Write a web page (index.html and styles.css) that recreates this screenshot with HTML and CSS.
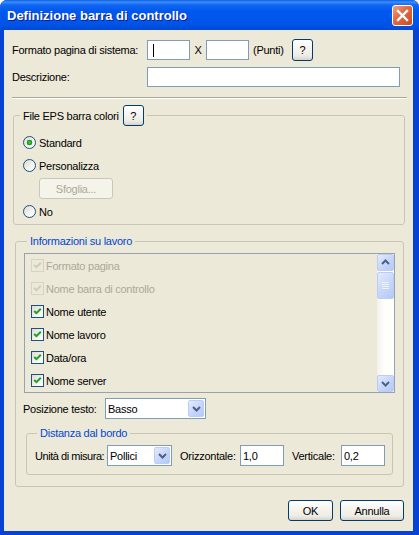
FILE: index.html
```html
<!DOCTYPE html>
<html lang="it">
<head>
<meta charset="utf-8">
<title>Definizione barra di controllo</title>
<link rel="stylesheet" href="styles.css">
</head>
<body>
<div class="window">
  <header class="titlebar">
    <span class="title">Definizione barra di controllo</span>
    <span class="close"><svg width="13" height="13" viewBox="0 0 13 13"><path d="M2 2 L11 11 M11 2 L2 11" stroke="#fff" stroke-width="2.4" stroke-linecap="square"/></svg></span>
  </header>
  <main class="client">
    <div class="row row1">
      <span class="lbl lbl-main">Formato pagina di sistema:</span>
      <div class="field f-small"><span class="caret"></span></div>
      <span class="times">X</span>
      <div class="field f-small"></div>
      <span class="units">(Punti)</span>
      <button class="btn help">?</button>
    </div>
    <div class="row row2">
      <span class="lbl lbl-main">Descrizione:</span>
      <div class="field f-desc"></div>
    </div>
    <div class="sep"></div>

    <fieldset class="group g1">
      <legend class="legend legend-g1">File EPS barra colori <button class="btn help help-sm">?</button></legend>
      <div class="g1-body">
        <div class="opt"><span class="radio checked"></span>Standard</div>
        <div class="opt"><span class="radio"></span>Personalizza</div>
        <button class="btn disabled browse">Sfoglia...</button>
        <div class="opt"><span class="radio"></span>No</div>
      </div>
    </fieldset>

    <fieldset class="group g2">
      <legend class="legend blue legend-g2">Informazioni su lavoro</legend>
      <div class="g2-body">
        <div class="listbox">
          <div class="items">
            <div class="item dis"><span class="check off"><svg width="11" height="11" viewBox="0 0 11 11"><path d="M2.2 5 L4.4 7.2 L8.8 2.8" fill="none" stroke="#CFCCC0" stroke-width="2"/></svg></span>Formato pagina</div>
            <div class="item dis"><span class="check off"><svg width="11" height="11" viewBox="0 0 11 11"><path d="M2.2 5 L4.4 7.2 L8.8 2.8" fill="none" stroke="#CFCCC0" stroke-width="2"/></svg></span>Nome barra di controllo</div>
            <div class="item"><span class="check"><svg width="11" height="11" viewBox="0 0 11 11"><path d="M2.2 5 L4.4 7.2 L8.8 2.8" fill="none" stroke="#21A121" stroke-width="2"/></svg></span>Nome utente</div>
            <div class="item"><span class="check"><svg width="11" height="11" viewBox="0 0 11 11"><path d="M2.2 5 L4.4 7.2 L8.8 2.8" fill="none" stroke="#21A121" stroke-width="2"/></svg></span>Nome lavoro</div>
            <div class="item"><span class="check"><svg width="11" height="11" viewBox="0 0 11 11"><path d="M2.2 5 L4.4 7.2 L8.8 2.8" fill="none" stroke="#21A121" stroke-width="2"/></svg></span>Data/ora</div>
            <div class="item"><span class="check"><svg width="11" height="11" viewBox="0 0 11 11"><path d="M2.2 5 L4.4 7.2 L8.8 2.8" fill="none" stroke="#21A121" stroke-width="2"/></svg></span>Nome server</div>
          </div>
          <div class="sb">
            <span class="sb-btn"><svg width="9" height="7" viewBox="0 0 9 7"><path d="M1 5 L4.5 1.5 L8 5" fill="none" stroke="#4D6185" stroke-width="2"/></svg></span>
            <span class="sb-thumb"><svg width="7" height="8" viewBox="0 0 7 8"><path d="M0 0.5 H7 M0 2.5 H7 M0 4.5 H7 M0 6.5 H7" stroke="#EEF4FE" stroke-width="1"/></svg></span>
            <span class="sb-track"></span>
            <span class="sb-btn"><svg width="9" height="7" viewBox="0 0 9 7"><path d="M1 2 L4.5 5.5 L8 2" fill="none" stroke="#4D6185" stroke-width="2"/></svg></span>
          </div>
        </div>

        <div class="row posrow">
          <span class="lbl lbl-pos">Posizione testo:</span>
          <div class="select sel-pos"><span class="sel-text">Basso</span><span class="drop"><svg width="9" height="7" viewBox="0 0 9 7"><path d="M1 2 L4.5 5.5 L8 2" fill="none" stroke="#4D6185" stroke-width="2"/></svg></span></div>
        </div>

        <fieldset class="group g3">
          <legend class="legend blue legend-g3">Distanza dal bordo</legend>
          <div class="row g3-body">
            <span class="lbl lbl-unit">Unità di misura:</span>
            <div class="select sel-unit"><span class="sel-text">Pollici</span><span class="drop"><svg width="9" height="7" viewBox="0 0 9 7"><path d="M1 2 L4.5 5.5 L8 2" fill="none" stroke="#4D6185" stroke-width="2"/></svg></span></div>
            <span class="lbl lbl-oriz">Orizzontale:</span>
            <div class="field f-num">1,0</div>
            <span class="lbl lbl-vert">Verticale:</span>
            <div class="field f-num">0,2</div>
          </div>
        </fieldset>
      </div>
    </fieldset>

    <div class="actions">
      <button class="btn ok">OK</button>
      <button class="btn cancel">Annulla</button>
    </div>
  </main>
</div>
</body>
</html>
```

FILE: styles.css
```css
html, body {
  margin: 0;
  background: #ffffff;
}

body {
  font-family: "Liberation Sans", Arial, sans-serif;
  font-size: 11px;
  letter-spacing: -0.25px;
  color: #000;
}

.window {
  width: 419px;
  height: 535px;
  display: flex;
  flex-direction: column;
  background: #0842D5;
  border-radius: 7px 7px 0 0;
  overflow: hidden;
}

.titlebar {
  height: 30px;
  flex: none;
  box-sizing: border-box;
  display: flex;
  align-items: center;
  justify-content: space-between;
  padding: 0 6px 0 7px;
  background: linear-gradient(to bottom, #0A5CE8 0px, #3D8EFC 2px, #1166F2 5px, #0058EE 11px, #0055E8 24px, #0049D6 30px);
  color: #fff;
}

.title {
  font: bold 13px "Liberation Sans", Arial, sans-serif;
  letter-spacing: 0;
  text-shadow: 1px 1px 0 #0A1E8C;
  padding-top: 1px;
}

.close {
  width: 21px;
  height: 21px;
  box-sizing: border-box;
  border: 1px solid #ffffff;
  border-radius: 3px;
  background: linear-gradient(135deg, #F2A184 0%, #E36C43 40%, #CC4A20 100%);
  display: flex;
  align-items: center;
  justify-content: center;
}

.client {
  flex: 1;
  margin: 0 6px 4px 4px;
  background: #ECE9D8;
  display: flow-root;
}

.row {
  display: flex;
  align-items: center;
}

.row1 {
  margin: 9px 0 0 8px;
  height: 22px;
}

.row2 {
  margin: 6px 0 0 8px;
  height: 20px;
}

.lbl {
  white-space: nowrap;
  flex: none;
}

.lbl-main { width: 135px; }

.field {
  box-sizing: border-box;
  height: 20px;
  border: 1px solid #7F9DB9;
  background: #fff;
  display: flex;
  align-items: center;
  padding-left: 2px;
  flex: none;
}

.f-small { width: 43px; }
.f-desc { width: 253px; }

.caret {
  width: 1px;
  height: 13px;
  background: #000;
  margin-left: 3px;
}

.times {
  width: 16px;
  text-align: center;
  flex: none;
}

.units {
  width: 43px;
  padding-left: 4px;
  box-sizing: border-box;
  flex: none;
}

button {
  font: inherit;
  letter-spacing: inherit;
  color: #000;
  padding: 0;
  margin: 0;
}

.btn {
  box-sizing: border-box;
  border: 1px solid #003C74;
  border-radius: 3px;
  background: linear-gradient(to bottom, #FFFFFF 0%, #F6F5F0 40%, #ECEBE4 80%, #D8D2C6 100%);
  text-align: center;
}

.help {
  width: 21px;
  height: 22px;
  flex: none;
}

.help-sm {
  height: 21px;
}

.btn.disabled {
  border-color: #C9C7BA;
  background: #F5F4EA;
  color: #ACA899;
}

.sep {
  margin: 10px 6px 0 8px;
  border-top: 1px solid #ACA899;
  border-bottom: 1px solid #FFFFFF;
}

.group {
  padding: 0;
  border: 1px solid #C8C5B6;
  border-radius: 3px;
  min-width: 0;
}

.legend {
  padding: 0 3px;
  line-height: 14px;
}

.blue { color: #0046D5; }

.g1 {
  margin: 6px 8px 0 9px;
}

.legend-g1 {
  display: flex;
  align-items: center;
  gap: 4px;
  margin-left: 6px;
}

.g1-body {
  padding: 5px 0 1px 9px;
}

.opt {
  height: 23px;
  display: flex;
  align-items: center;
  gap: 3px;
}

.radio {
  width: 13px;
  height: 13px;
  box-sizing: border-box;
  border-radius: 50%;
  border: 1px solid #1C5180;
  background: linear-gradient(135deg, #DCDBD5 0%, #F4F4F0 60%, #FFFFFF 100%);
  flex: none;
}

.radio.checked {
  background:
    radial-gradient(circle at 50% 50%, #55CF4E 0, #21A121 2px, #1A8F1A 2.6px, transparent 3.1px),
    linear-gradient(135deg, #DCDBD5 0%, #F4F4F0 60%, #FFFFFF 100%);
}

.browse {
  display: block;
  width: 74px;
  height: 21px;
  margin: 1px 0 1px 16px;
}

.g2 {
  margin: 9px 9px 0 11px;
}

.legend-g2 {
  margin-left: 11px;
}

.g2-body {
  padding: 5px 0 11px 7px;
}

.listbox {
  margin: 0 8px 0 1px;
  height: 140px;
  box-sizing: border-box;
  border: 1px solid #97A3B1;
  display: flex;
  overflow: hidden;
}

.items {
  flex: 1;
}

.item {
  height: 23px;
  display: flex;
  align-items: center;
  padding-left: 6px;
  gap: 2px;
}

.item.dis {
  color: #ACA899;
}

.check {
  width: 13px;
  height: 13px;
  box-sizing: border-box;
  border: 1px solid #1C5180;
  background: linear-gradient(135deg, #DCDBD5 0%, #F4F4F0 60%, #FFFFFF 100%);
  display: flex;
  flex: none;
}

.check.off {
  border-color: #D6D3C6;
  background: transparent;
}

.sb {
  width: 17px;
  flex: none;
  display: flex;
  flex-direction: column;
  background: linear-gradient(to right, #F3F1EA, #FEFEFB 40%, #FEFEFB);
}

.sb-btn, .sb-thumb {
  height: 17px;
  box-sizing: border-box;
  border: 1px solid #BCCDF3;
  border-radius: 2px;
  background: linear-gradient(135deg, #E3EBFE 0%, #C8D7FB 50%, #B5C9F7 100%);
  display: flex;
  align-items: center;
  justify-content: center;
  flex: none;
}

.sb-thumb {
  height: 27px;
  margin-top: 1px;
}

.sb-track {
  flex: 1;
}

.posrow {
  margin-top: 5px;
  height: 21px;
}

.lbl-pos { width: 82px; }

.select {
  box-sizing: border-box;
  height: 21px;
  border: 1px solid #7F9DB9;
  background: #fff;
  display: flex;
  align-items: center;
  padding: 1px 1px 1px 2px;
  flex: none;
}

.sel-text {
  flex: 1;
}

.drop {
  width: 16px;
  height: 17px;
  box-sizing: border-box;
  border: 1px solid #BCCDF3;
  border-radius: 2px;
  background: linear-gradient(135deg, #E3EBFE 0%, #C8D7FB 50%, #B5C9F7 100%);
  display: flex;
  align-items: center;
  justify-content: center;
}

.sel-pos { width: 101px; }

.g3 {
  margin: 7px 10px 0 3px;
}

.legend-g3 {
  margin-left: 10px;
}

.g3-body {
  padding: 5px 0 8px 8px;
  height: 21px;
  box-sizing: content-box;
}

.lbl-unit { width: 72px; letter-spacing: -0.45px; }
.sel-unit { width: 65px; }
.lbl-oriz { width: 60px; margin-left: 8px; }
.f-num { width: 44px; height: 21px; }
.lbl-vert { width: 49px; margin-left: 8px; }

.actions {
  display: flex;
  justify-content: flex-end;
  gap: 7px;
  margin-top: 13px;
  padding-right: 9px;
}

.ok, .cancel {
  height: 21px;
}

.ok { width: 45px; }
.cancel { width: 64px; }
```
